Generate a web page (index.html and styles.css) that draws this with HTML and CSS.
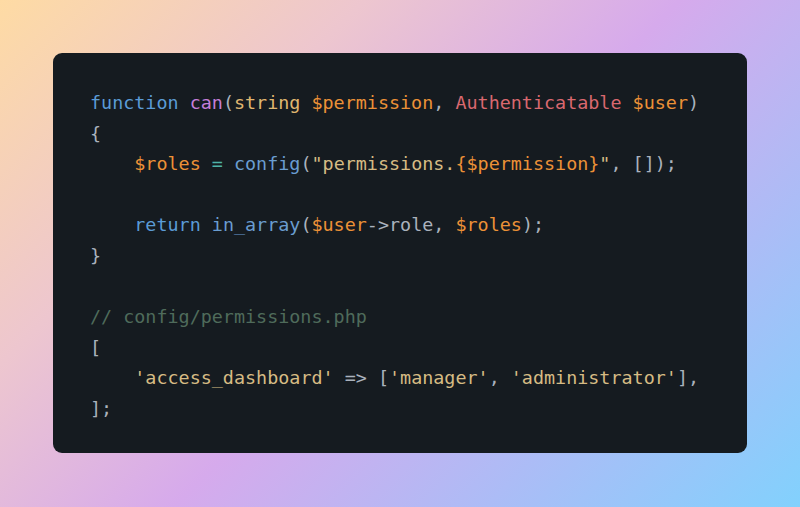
FILE: index.html
```html
<!DOCTYPE html>
<html>
<head>
<meta charset="utf-8">
<link rel="stylesheet" href="styles.css">
</head>
<body>
<div class="stage">
  <div class="card">
<pre class="code"><span class="kw">function</span> <span class="fn">can</span><span class="p">(</span><span class="ty">string</span> <span class="var">$permission</span><span class="p">,</span> <span class="cls">Authenticatable</span> <span class="var">$user</span><span class="p">)</span>
<span class="p">{</span>
    <span class="var">$roles</span> <span class="op">=</span> <span class="call">config</span><span class="p">(</span><span class="str">"permissions.</span><span class="var">{$permission}</span><span class="str">"</span><span class="p">, []);</span>

    <span class="kw">return</span> <span class="call">in_array</span><span class="p">(</span><span class="var">$user</span><span class="p">-&gt;role,</span> <span class="var">$roles</span><span class="p">);</span>
<span class="p">}</span>

<span class="cm">// config/permissions.php</span>
<span class="p">[</span>
    <span class="str">'access_dashboard'</span> <span class="p">=&gt; [</span><span class="str">'manager'</span><span class="p">,</span> <span class="str">'administrator'</span><span class="p">],</span>
<span class="p">];</span></pre>
  </div>
</div>
</body>
</html>
```
FILE: styles.css
```css
html, body {
  margin: 0;
  padding: 0;
}
body {
  width: 800px;
  height: 507px;
  overflow: hidden;
  background: linear-gradient(135deg, #fedba4 0%, #edc6cf 28%, #d6aaec 52%, #acbcf6 76%, #82d1fd 100%);
}
.stage {
  box-sizing: border-box;
  height: 507px;
  padding: 53px;
  display: flex;
}
.card {
  box-sizing: border-box;
  width: 694px;
  height: 400px;
  background: #151b20;
  border-radius: 9px;
  padding: 35px 20px 20px 37px;
}
.code {
  margin: 0;
  font-family: "DejaVu Sans Mono", monospace;
  font-size: 18.4px;
  line-height: 30.6px;
  color: #aab2bd;
  white-space: pre;
}
.kw { color: #5b9bd6; }
.fn { color: #c57ed8; }
.ty { color: #e0b770; }
.var { color: #ec9137; }
.cls { color: #d9686f; }
.p { color: #aab2bd; }
.op { color: #4fb3a8; }
.call { color: #6a9dd0; }
.str { color: #d6bb84; }
.cm { color: #4f6b5b; }
```
